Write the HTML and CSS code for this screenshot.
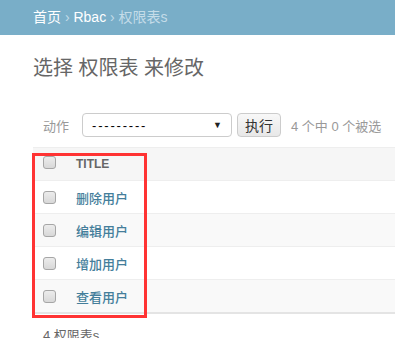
FILE: index.html
```html
<!DOCTYPE html>
<html lang="zh-CN">
<head>
    <meta charset="UTF-8">
    <title>选择 权限表 来修改</title>
    <link rel="stylesheet" href="styles.css">
</head>
<body>
    <div class="breadcrumbs">
        <a href="#">首页</a> <span class="sep">›</span> <a href="#">Rbac</a> <span class="sep">›</span> <span class="current">权限表s</span>
    </div>
    <div class="content">
        <h1>选择 权限表 来修改</h1>
        <div class="changelist">
            <div class="actions">
                <label>动作</label>
                <span class="select-box">---------<span class="arrow">▼</span></span>
                <button class="go">执行</button>
                <span class="counter">4 个中 0 个被选</span>
            </div>
            <table class="result-list">
                <thead>
                    <tr>
                        <th class="check-col"><span class="checkbox"></span></th>
                        <th>Title</th>
                    </tr>
                </thead>
                <tbody>
                    <tr>
                        <td class="check-col"><span class="checkbox"></span></td>
                        <td><a href="#">删除用户</a></td>
                    </tr>
                    <tr class="alt">
                        <td class="check-col"><span class="checkbox"></span></td>
                        <td><a href="#">编辑用户</a></td>
                    </tr>
                    <tr>
                        <td class="check-col"><span class="checkbox"></span></td>
                        <td><a href="#">增加用户</a></td>
                    </tr>
                    <tr class="alt">
                        <td class="check-col"><span class="checkbox"></span></td>
                        <td><a href="#">查看用户</a></td>
                    </tr>
                </tbody>
            </table>
            <p class="paginator">4 权限表s</p>
        </div>
    </div>
    <div class="highlight"></div>
</body>
</html>
```

FILE: styles.css
```css
body {
    margin: 0;
    font-family: "Liberation Sans", "Noto Sans CJK SC", sans-serif;
    color: #333;
    background: #fff;
}

a {
    text-decoration: none;
}

.breadcrumbs {
    background: #79aec8;
    padding: 10px 33px;
    font-size: 14px;
    line-height: 15px;
    color: #c4dce8;
}

.breadcrumbs a {
    color: #fff;
}

.breadcrumbs .sep {
    color: #c4dce8;
}

.content {
    padding: 21px 0 0 33px;
}

h1 {
    margin: 0;
    font-size: 20px;
    line-height: 24px;
    font-weight: 400;
    color: #666;
}

.actions {
    margin-top: 23px;
    padding: 10px;
    display: flex;
    align-items: center;
    height: 24px;
    font-size: 13px;
    color: #999;
}

.actions label {
    margin-right: 13px;
}

.select-box {
    box-sizing: border-box;
    width: 150px;
    height: 24px;
    border: 1px solid #ccc;
    border-radius: 4px;
    padding: 0 9px;
    display: flex;
    align-items: center;
    justify-content: space-between;
    color: #000;
    font-size: 13px;
    letter-spacing: 1.8px;
}

.select-box .arrow {
    font-size: 9px;
    letter-spacing: 0;
    color: #222;
}

.go {
    box-sizing: border-box;
    margin-left: 5px;
    width: 44px;
    height: 24px;
    border: 1px solid #ccc;
    border-radius: 4px;
    background: linear-gradient(#f8f8f8, #e8e8e8);
    font-family: inherit;
    font-size: 14px;
    color: #333;
    padding: 0;
}

.counter {
    margin-left: 10px;
}

.result-list {
    width: 100%;
    border-collapse: collapse;
    font-size: 13px;
}

.result-list th,
.result-list td {
    text-align: left;
    padding: 0 10px;
    height: 32px;
    border-top: 1px solid #eee;
}

.result-list thead th {
    background: #f6f6f6;
    font-size: 12px;
    font-weight: bold;
    text-transform: uppercase;
    color: #666;
}

.result-list thead .check-col {
    vertical-align: top;
    padding-top: 8px;
    height: 24px;
}

.result-list .check-col {
    width: 13px;
}

.result-list tbody tr.alt td {
    background: #f9f9f9;
}

.result-list tbody tr:last-child td {
    border-bottom: 2px solid #e4e4e4;
}

.result-list td a {
    color: #447e9b;
    font-weight: 500;
}

.checkbox {
    display: block;
    box-sizing: border-box;
    width: 13px;
    height: 13px;
    border: 1px solid #a6a6a6;
    border-radius: 3px;
    background: linear-gradient(#ececec, #d8d8d8);
}

.paginator {
    margin: 12px 0 0;
    padding-left: 10px;
    font-size: 13px;
    line-height: 20px;
    color: #666;
}

.highlight {
    position: absolute;
    left: 32px;
    top: 153px;
    width: 109px;
    height: 159px;
    border: 3px solid #f33;
}
```
